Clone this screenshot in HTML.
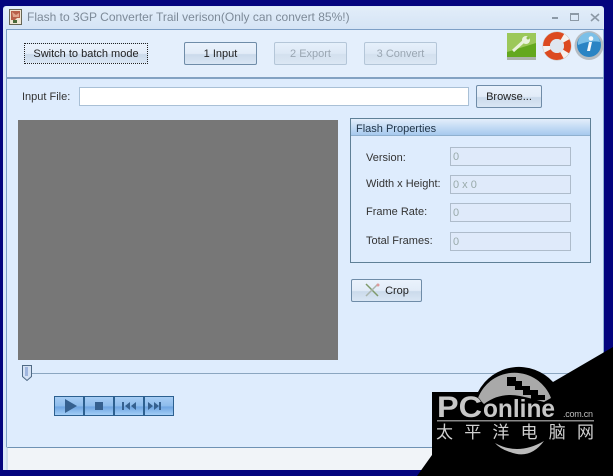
<!DOCTYPE html>
<html><head><meta charset="utf-8">
<style>
*{box-sizing:border-box}
html,body{margin:0;padding:0}
body{width:613px;height:476px;overflow:hidden;position:relative;background:#04047e;font-family:"Liberation Sans","Noto Sans CJK SC",sans-serif;font-size:11px;color:#222}
.a{position:absolute}
.btn{position:absolute;border:1px solid #6f8ca8;border-radius:2px;background:linear-gradient(#eaf2fc 0,#e2ecf8 50%,#cbdaeb 55%,#d9e6f4 100%);text-align:center;color:#222;white-space:nowrap}
.dis{border-color:#b4c6d8;color:#9aa6b2;background:linear-gradient(#e6f0fb,#dce8f5 50%,#d3e0ee 55%,#dbe7f4)}
.lb{position:absolute;white-space:nowrap;color:#333;line-height:14px}
.inp{position:absolute;left:450px;width:121px;height:19px;background:#dfeafa;border:1px solid #aebccb;color:#9aa;padding-left:2px;line-height:19px;font-size:11px}
.pb{position:absolute;top:396px;height:20px;width:30px;border:1px solid #2c6090;background:linear-gradient(#a6cdf4 0,#8dbcec 50%,#6ea5e2 55%,#a3cdf6 100%)}
</style></head><body>
<!-- window -->
<div class="a" style="left:3px;top:6px;width:601px;height:464px;background:#dbe9f9;border-radius:3px 3px 0 0"></div>
<div class="a" style="left:5px;top:7px;width:598px;height:22px;background:linear-gradient(#e2edf9,#d5e4f5)"></div>
<!-- title icon -->
<svg class="a" style="left:9px;top:9px" width="13" height="16" viewBox="0 0 13 16"><rect x=".5" y=".5" width="12" height="15" fill="#efe6d4" stroke="#665"/><path d="M2 2h9v7H8L6 11H2z" fill="#b8604a"/><path d="M3 3l4 3 3-2v4H4z" fill="#e0a58c"/><rect x="4" y="11" width="4" height="3" fill="#4a6a3a"/></svg>
<div class="a" style="left:27px;top:10px;font-size:12px;line-height:14px;color:#7d8a98;white-space:nowrap">Flash to 3GP Converter Trail verison(Only can convert 85%!)</div>
<!-- win controls -->
<div class="a" style="left:552px;top:17px;width:6px;height:2px;background:#8c99a6"></div>
<div class="a" style="left:570px;top:13px;width:9px;height:8px;border:1px solid #8c99a6;border-top-width:2px"></div>
<svg class="a" style="left:590px;top:13px" width="10" height="9"><path d="M1 1l8 7M9 1L1 8" stroke="#8c99a6" stroke-width="1.600"/></svg>
<!-- main panel -->
<div class="a" style="left:6px;top:29px;width:598px;height:418px;background:#deecfd;border:1px solid #7d9fc6;border-bottom:0;border-right:1px solid #8fb0d4"></div>
<div class="a" style="left:7px;top:30px;width:596px;height:47px;background:#e4effc"></div>
<div class="a" style="left:6px;top:77px;width:598px;height:2px;background:#83a2c2"></div>
<!-- top buttons -->
<div class="btn" style="left:24px;top:43px;width:124px;height:21px;line-height:21px;border:1px dotted #222;border-radius:0">Switch to batch mode</div>
<div class="btn" style="left:184px;top:42px;width:73px;height:23px;line-height:23px">1 Input</div>
<div class="btn dis" style="left:274px;top:42px;width:73px;height:23px;line-height:23px">2 Export</div>
<div class="btn dis" style="left:364px;top:42px;width:73px;height:23px;line-height:23px">3 Convert</div>
<!-- top icons -->
<svg class="a" style="left:506px;top:31px" width="31" height="30" viewBox="0 0 31 30"><rect x="1" y="2" width="29" height="24" fill="#63a81e"/><path d="M1 2h29v10L1 21z" fill="#9cc85a"/><rect x="1" y="26" width="29" height="3" fill="#aab3aa"/><path d="M7 20L18 10" stroke="#e9f2dc" stroke-width="3"/><circle cx="20" cy="9" r="4" fill="#e9f2dc"/><circle cx="22" cy="7" r="1.500" fill="#8cbf4a"/></svg>
<svg class="a" style="left:541px;top:30px" width="32" height="32" viewBox="0 0 32 32"><circle cx="16" cy="16" r="14.500" fill="#c8c2bc"/><circle cx="16" cy="16" r="10.500" fill="none" stroke="#f3f1ef" stroke-width="7"/><circle cx="16" cy="16" r="10.500" fill="none" stroke="#dc4a20" stroke-width="7" stroke-dasharray="22 5.500 11 5.500 16.500 5.500" transform="rotate(180 16 16)"/><circle cx="16" cy="16" r="7" fill="#dfe6ef"/></svg>
<svg class="a" style="left:574px;top:30px" width="30" height="31" viewBox="0 0 30 31"><circle cx="15" cy="15.500" r="14.500" fill="#b5bcc2"/><circle cx="15" cy="15" r="12" fill="#2a84c4"/><path d="M4 15a11 11 0 0 1 22-3q-10-2-22 3z" fill="#7cc0e8"/><path d="M15 12l-2 9h3l2-9z" fill="#f4f8fb"/><circle cx="17" cy="8.500" r="2.300" fill="#f4f8fb"/></svg>
<!-- input row -->
<div class="lb" style="left:22px;top:90px">Input File:</div>
<div class="a" style="left:79px;top:87px;width:390px;height:19px;background:#fff;border:1px solid #a9c0d6"></div>
<div class="btn" style="left:476px;top:85px;width:66px;height:23px;line-height:23px">Browse...</div>
<!-- preview -->
<div class="a" style="left:18px;top:120px;width:320px;height:240px;background:#777"></div>
<!-- properties -->
<div class="a" style="left:350px;top:118px;width:241px;height:145px;border:1px solid #5f8097"></div>
<div class="a" style="left:351px;top:119px;width:239px;height:17px;background:linear-gradient(#e3eefb,#a6c9ee);border-bottom:1px solid #8fb0cf"></div>
<div class="lb" style="left:356px;top:122px;color:#1f3346">Flash Properties</div>
<div class="lb" style="left:366px;top:151px">Version:</div>
<div class="lb" style="left:366px;top:177px">Width x Height:</div>
<div class="lb" style="left:366px;top:205px">Frame Rate:</div>
<div class="lb" style="left:366px;top:234px">Total Frames:</div>
<div class="inp" style="top:147px">0</div>
<div class="inp" style="top:175px">0 x 0</div>
<div class="inp" style="top:203px">0</div>
<div class="inp" style="top:232px">0</div>
<!-- crop -->
<div class="btn" style="left:351px;top:279px;width:71px;height:23px;line-height:23px;padding-left:21px">Crop</div>
<svg class="a" style="left:364px;top:283px" width="16" height="15"><path d="M2 1l12 12" stroke="#7f9a6a" stroke-width="1.500"/><path d="M14 1L2 13" stroke="#aab5ae" stroke-width="1.500"/><circle cx="14" cy="2" r="1.500" fill="#d99"/></svg>
<!-- slider -->
<div class="a" style="left:30px;top:373px;width:574px;height:1px;background:#8ba6c0"></div>
<svg class="a" style="left:21px;top:364px" width="12" height="18"><path d="M1.500 1.500h9v11l-4.500 4-4.500-4z" fill="#d5e2f4" stroke="#4f6a85"/><rect x="4" y="3" width="3" height="9" fill="#a0b6de"/></svg>
<!-- player -->
<div class="pb" style="left:54px;width:30px"></div>
<div class="pb" style="left:84px"></div>
<div class="pb" style="left:114px"></div>
<div class="pb" style="left:144px"></div>
<svg class="a" style="left:54px;top:396px" width="120" height="20" fill="#35608f"><path d="M11 3l12 7-12 7z"/><rect x="41" y="6" width="8" height="8"/><path d="M68 6h2v8h-2zM76 6v8l-5-4zM82 6v8l-5-4zM94 6v8l5-4zM100 6v8l5-4zM105 6h2v8h-2z"/></svg>
<!-- status bar -->
<div class="a" style="left:6px;top:447px;width:598px;height:23px;background:#f1f4f8;border-top:1px solid #6f92b4;border-left:2px solid #cfdcec"></div>
<!-- watermark -->
<svg class="a" style="left:0;top:0" width="613" height="476" viewBox="0 0 613 476">
<path d="M613 347L553 382A46 46 0 0 0 478 392H432V455L417 476H613z" fill="#000"/>
<path d="M478 398A39 39 0 0 1 551 398L544 402Q530 398 520 396Q500 392 484 404z" fill="#a9a9a9"/>
<path d="M507 377h9v4h6v5h8v4h8v5h7v5h-14v-5h-8v-5h-8v-4h-8z" fill="#000"/>
<path d="M495 443Q518 456 544 441Q530 460 510 452Q500 449 495 443z" fill="#bbb"/>
<rect x="437" y="420" width="157" height="1.500" fill="#888"/>
<text x="437" y="417" font-family="Liberation Sans" font-size="30" font-weight="bold" fill="#c8c8c8" stroke="#000" stroke-width="1" paint-order="stroke" textLength="45" lengthAdjust="spacingAndGlyphs">PC</text>
<text x="483" y="417" font-family="Liberation Sans" font-size="25" font-weight="bold" fill="#c8c8c8" stroke="#000" stroke-width="1.500" paint-order="stroke" textLength="72" lengthAdjust="spacingAndGlyphs">online</text>
<text x="563" y="417" font-family="Liberation Sans" font-size="9" fill="#bdbdbd" textLength="30">.com.cn</text>
<text x="436" y="438" font-family="Noto Sans CJK SC" font-size="17" fill="#d0d0d0" textLength="158">太平洋电脑网</text>
</svg>
</body></html>
